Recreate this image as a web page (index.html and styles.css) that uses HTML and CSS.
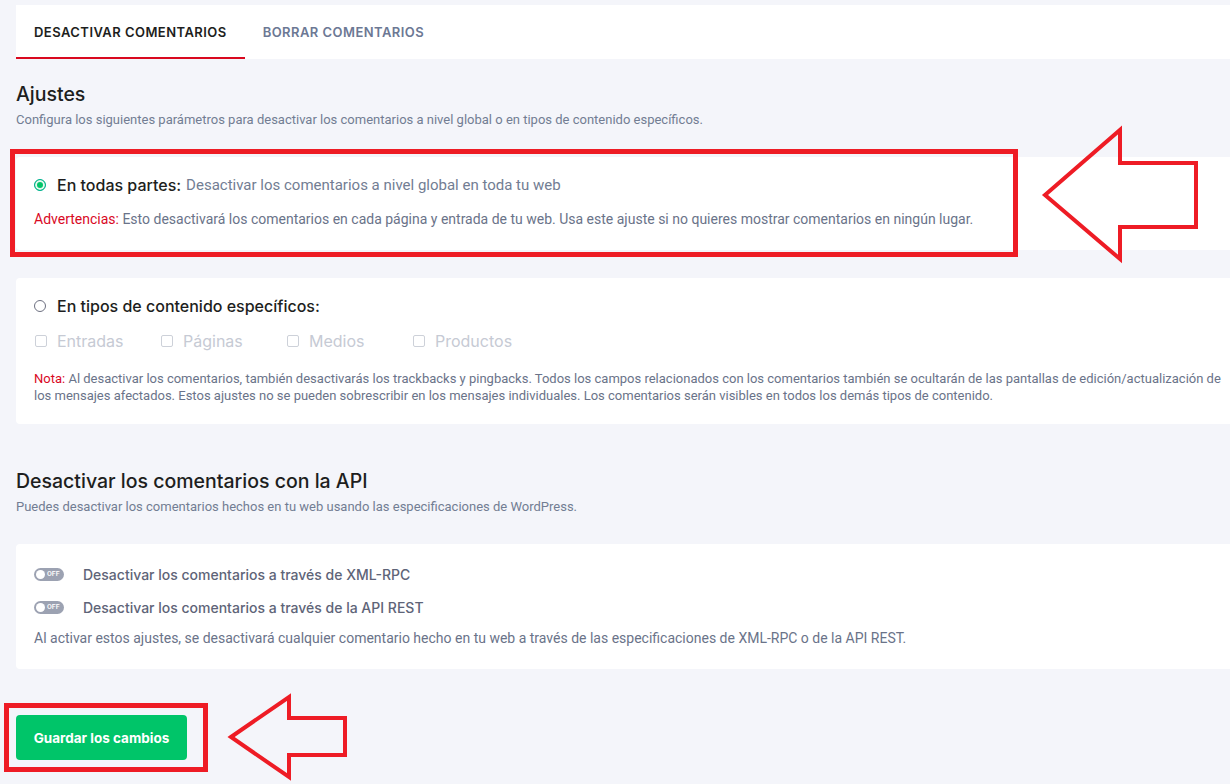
FILE: index.html
```html
<!DOCTYPE html>
<html lang="es">
<head>
    <meta charset="UTF-8">
    <meta name="viewport" content="width=device-width, initial-scale=1.0">
    <title>Desactivar comentarios</title>
    <link rel="stylesheet" href="styles.css">
</head>
<body>
    <div class="page">
        <div class="tabs">
            <div class="tab active">DESACTIVAR COMENTARIOS</div>
            <div class="tab">BORRAR COMENTARIOS</div>
        </div>

        <h2 class="title">Ajustes</h2>
        <p class="subtitle">Configura los siguientes parámetros para desactivar los comentarios a nivel global o en tipos de contenido específicos.</p>

        <div class="card card-global">
            <div class="option">
                <span class="radio checked"></span>
                <span class="option-label">En todas partes:</span>
                <span class="option-desc">Desactivar los comentarios a nivel global en toda tu web</span>
            </div>
            <p class="text warn"><span class="red">Advertencias:</span> Esto desactivará los comentarios en cada página y entrada de tu web. Usa este ajuste si no quieres mostrar comentarios en ningún lugar.</p>
        </div>

        <div class="card card-types">
            <div class="option">
                <span class="radio"></span>
                <span class="option-label">En tipos de contenido específicos:</span>
            </div>
            <div class="checks">
                <div class="check"><span class="box"></span>Entradas</div>
                <div class="check"><span class="box"></span>Páginas</div>
                <div class="check"><span class="box"></span>Medios</div>
                <div class="check"><span class="box"></span>Productos</div>
            </div>
            <p class="text small"><span class="red">Nota:</span> Al desactivar los comentarios, también desactivarás los trackbacks y pingbacks. Todos los campos relacionados con los comentarios también se ocultarán de las pantallas de edición/actualización de los mensajes afectados. Estos ajustes no se pueden sobrescribir en los mensajes individuales. Los comentarios serán visibles en todos los demás tipos de contenido.</p>
        </div>

        <h2 class="title title-api">Desactivar los comentarios con la API</h2>
        <p class="subtitle">Puedes desactivar los comentarios hechos en tu web usando las especificaciones de WordPress.</p>

        <div class="card card-api">
            <div class="toggle-row">
                <span class="toggle"><span class="knob"></span><span class="off">OFF</span></span>
                <span class="toggle-label">Desactivar los comentarios a través de XML-RPC</span>
            </div>
            <div class="toggle-row">
                <span class="toggle"><span class="knob"></span><span class="off">OFF</span></span>
                <span class="toggle-label">Desactivar los comentarios a través de la API REST</span>
            </div>
            <p class="text">Al activar estos ajustes, se desactivará cualquier comentario hecho en tu web a través de las especificaciones de XML-RPC o de la API REST.</p>
        </div>

        <button class="save">Guardar los cambios</button>
    </div>

    <!-- anotaciones rojas -->
    <div class="mark mark-global"></div>
    <div class="mark mark-save"></div>
    <svg class="arrow" width="1230" height="784" viewBox="0 0 1230 784">
        <polygon points="1045,195 1120,130 1120,163 1196,163 1196,227 1120,227 1120,259" fill="none" stroke="#ee1c25" stroke-width="4"/>
        <polygon points="231,737 289,697 289,718 345,718 345,755 289,755 289,777" fill="none" stroke="#ee1c25" stroke-width="4"/>
    </svg>
</body>
</html>
```

FILE: styles.css
```css
body {
    margin: 0;
    background: #f4f5fa;
    font-family: 'Inter', 'DejaVu Sans', sans-serif;
    color: #1d1e20;
    overflow: hidden;
}
.page {
    padding: 5px 0 0 16px;
}
.tabs {
    display: flex;
    background: #ffffff;
    height: 54px;
}
.tab {
    display: flex;
    align-items: center;
    padding: 2px 18px 0;
    font-size: 13px;
    font-weight: 600;
    color: #6c7894;
    box-sizing: border-box;
    border-bottom: 2px solid transparent;
    letter-spacing: 0.45px;
}
.tab.active {
    color: #1d1e20;
    border-bottom-color: #d9091f;
}
.title {
    margin: 23px 0 5px;
    font-size: 19.5px;
    line-height: 24px;
    font-weight: 500;
}
.title-api {
    margin-top: 45px;
}
.subtitle {
    margin: 0;
    font-family: 'Roboto', sans-serif;
    font-size: 13px;
    line-height: 18px;
    color: #727d93;
}
.card {
    background: #ffffff;
    margin-top: 28px;
    padding: 18px 0 20px 18px;
    border-radius: 4px 0 0 4px;
}
.card-global {
    padding-bottom: 22px;
}
.option {
    display: flex;
    align-items: center;
    height: 20px;
    font-size: 16px;
}
.radio {
    width: 12px;
    height: 12px;
    border: 1px solid #6d7081;
    border-radius: 50%;
    box-sizing: border-box;
    margin: 0 11px 0 0;
}
.radio.checked {
    border: 1px solid #00b090;
    background: #00c569;
    box-shadow: inset 0 0 0 2px #e3f8ee;
}
.option-label {
    font-weight: 500;
    margin-right: 5px;
}
.option-desc {
    font-family: 'Roboto', sans-serif;
    color: #727d93;
    font-size: 15px;
}
.text {
    margin: 15px 0 0;
    font-family: 'Roboto', sans-serif;
    font-size: 14px;
    line-height: 18px;
    color: #6a7389;
}
.text.small {
    margin-top: 19px;
    font-size: 13px;
    line-height: 17px;
}
.red {
    color: #d9091f;
}
.checks {
    display: flex;
    margin-top: 15px;
    height: 20px;
}
.check {
    width: 126px;
    display: flex;
    align-items: center;
    font-size: 16px;
    color: #c6cad4;
}
.box {
    width: 12px;
    height: 12px;
    border: 1px solid #cdd1d9;
    border-radius: 2px;
    box-sizing: border-box;
    margin: 0 10px 0 1px;
}
.card-api {
    padding-top: 20px;
    padding-bottom: 22px;
}
.toggle-row {
    display: flex;
    align-items: center;
    height: 20px;
    margin-bottom: 13px;
}
.toggle-row + .text {
    margin-top: -1px;
}
.toggle {
    position: relative;
    width: 30px;
    height: 13px;
    border-radius: 7px;
    background: #9ca2b2;
    margin-right: 19px;
}
.knob {
    position: absolute;
    left: 2px;
    top: 2px;
    width: 9px;
    height: 9px;
    border-radius: 50%;
    background: #ffffff;
}
.off {
    position: absolute;
    left: 13px;
    top: 2px;
    font-family: 'Roboto', sans-serif;
    font-size: 7px;
    line-height: 9px;
    color: #ffffff;
    font-weight: 500;
}
.toggle-label {
    font-size: 14px;
    font-weight: 500;
    color: #5e6478;
}
.save {
    margin-top: 46px;
    width: 171px;
    height: 45px;
    border: none;
    border-radius: 4px;
    background: #00c569;
    color: #ffffff;
    font-family: 'Inter', sans-serif;
    font-size: 13.5px;
    font-weight: 700;
    cursor: pointer;
}
.mark {
    position: absolute;
    border: 5px solid #ee1c25;
    box-sizing: border-box;
}
.mark-global {
    left: 10px;
    top: 149px;
    width: 1008px;
    height: 108px;
}
.mark-save {
    left: 4px;
    top: 703px;
    width: 204px;
    height: 69px;
}
.arrow {
    position: absolute;
    left: 0;
    top: 0;
    pointer-events: none;
}
```
